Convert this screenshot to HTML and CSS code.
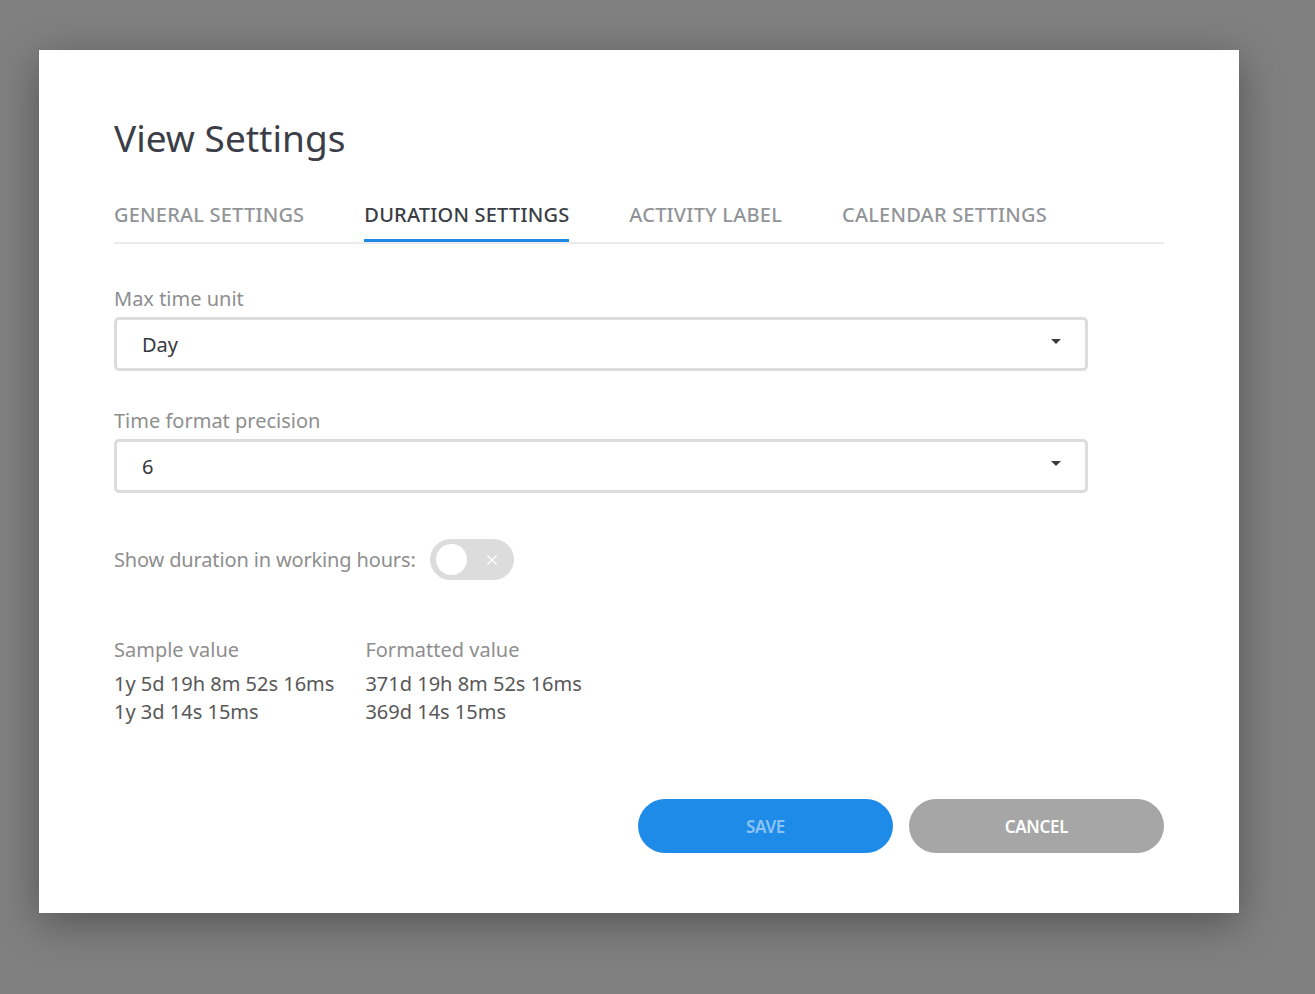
FILE: index.html
```html
<!DOCTYPE html>
<html>
<head>
<meta charset="utf-8">
<link rel="stylesheet" href="styles.css">
</head>
<body>
<div class="dialog">
  <h1 class="title">View Settings</h1>
  <div class="tabs">
    <div class="tab">GENERAL SETTINGS</div>
    <div class="tab active">DURATION SETTINGS</div>
    <div class="tab">ACTIVITY LABEL</div>
    <div class="tab">CALENDAR SETTINGS</div>
  </div>
  <div class="field">
    <div class="label">Max time unit</div>
    <div class="select"><span>Day</span><span class="caret"></span></div>
  </div>
  <div class="field">
    <div class="label">Time format precision</div>
    <div class="select"><span>6</span><span class="caret"></span></div>
  </div>
  <div class="toggle-row">
    <span class="label">Show duration in working hours:</span>
    <div class="toggle">
      <span class="knob"></span>
      <svg class="x" width="12" height="12" viewBox="0 0 12 12"><path d="M1.5 1.5L10.5 10.5M10.5 1.5L1.5 10.5" stroke="#fff" stroke-width="1.3" fill="none"/></svg>
    </div>
  </div>
  <div class="samples">
    <div class="col">
      <div class="label">Sample value</div>
      <div class="val">1y 5d 19h 8m 52s 16ms</div>
      <div class="val">1y 3d 14s 15ms</div>
    </div>
    <div class="col">
      <div class="label">Formatted value</div>
      <div class="val">371d 19h 8m 52s 16ms</div>
      <div class="val">369d 14s 15ms</div>
    </div>
  </div>
  <div class="actions">
    <button class="btn save">SAVE</button>
    <button class="btn cancel">CANCEL</button>
  </div>
</div>
</body>
</html>
```
FILE: styles.css
```css
html, body { margin: 0; padding: 0; }
body {
  background: #808080;
  height: 994px;
  padding: 50px 0 0 39px;
  box-sizing: border-box;
  font-family: "Noto Sans", "Open Sans", sans-serif;
  overflow: hidden;
}
.dialog {
  width: 1200px;
  height: 863px;
  background: #fff;
  box-sizing: border-box;
  padding: 0 75px;
  box-shadow: 0 10px 40px rgba(0,0,0,0.35);
  display: flex;
  flex-direction: column;
}
.title {
  margin: 60px 0 0 0;
  font-size: 37px;
  font-weight: 400;
  color: #3b3e47;
  line-height: 56px;
}
.tabs {
  display: flex;
  gap: 60px;
  margin-top: 36px;
  border-bottom: 2px solid #ebebeb;
}
.tab {
  font-size: 20px;
  font-weight: 500;
  letter-spacing: 0.2px;
  color: #929598;
  padding-bottom: 11px;
  border-bottom: 3px solid transparent;
  line-height: 26px;
}
.tab.active {
  color: #3a3d45;
  border-bottom-color: #1e88e5;
}
.field { margin-top: 42px; }
.field + .field { margin-top: 37px; }
.label {
  font-size: 20px;
  color: #8e8e8e;
  line-height: 26px;
}
.toggle-row .label { letter-spacing: -0.15px; }
.select {
  margin-top: 5px;
  width: 974px;
  height: 54px;
  box-sizing: border-box;
  border: 3px solid #dcdcdc;
  border-radius: 5px;
  display: flex;
  align-items: center;
  justify-content: space-between;
  padding: 0 24px 0 25px;
  font-size: 20px;
  color: #363840;
}
.caret {
  width: 0; height: 0;
  border-left: 5px solid transparent;
  border-right: 5px solid transparent;
  border-top: 5px solid #3a3a3a;
  margin-top: -6px;
}
.toggle-row {
  display: flex;
  align-items: center;
  gap: 14px;
  margin-top: 46px;
}
.toggle {
  position: relative;
  width: 84px;
  height: 41px;
  border-radius: 21px;
  background: #dcdcdc;
  display: flex;
  align-items: center;
  padding: 0 6px;
  box-sizing: border-box;
  justify-content: space-between;
}
.knob {
  width: 31px; height: 31px;
  border-radius: 50%;
  background: #fff;
}
.x { margin-right: 10px; }
.samples {
  display: flex;
  gap: 31px;
  margin-top: 57px;
}
.col .label { margin-bottom: 7px; }
.val {
  font-size: 20px;
  color: #585858;
  line-height: 28px;
}
.actions {
  display: flex;
  justify-content: flex-end;
  gap: 16px;
  margin-top: auto;
  margin-bottom: 60px;
}
.btn {
  width: 255px;
  height: 54px;
  border: none;
  border-radius: 27px;
  font-family: inherit;
  font-size: 17px;
  font-weight: 600;
  letter-spacing: -0.3px;
}
.save { background: #1f8be9; color: #8cc3f3; }
.cancel { background: #a6a6a6; color: #fff; }
```
